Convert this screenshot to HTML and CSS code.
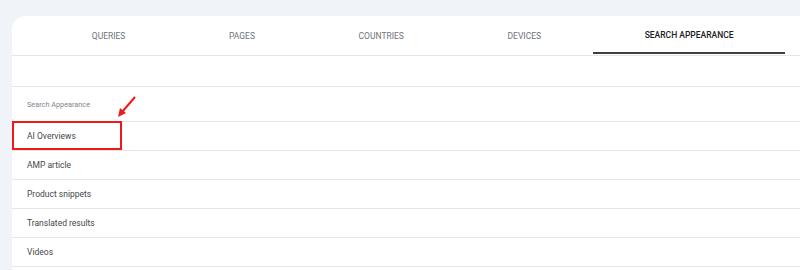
FILE: index.html
```html
<!DOCTYPE html>
<html lang="en">
<head>
    <meta charset="UTF-8">
    <meta name="viewport" content="width=device-width, initial-scale=1.0">
    <title>Search Appearance</title>
    <link rel="stylesheet" href="styles.css">
</head>
<body>
    <div class="report-card">
        <!-- Dimension tabs -->
        <nav class="tab-bar">
            <a class="tab">Queries</a>
            <a class="tab">Pages</a>
            <a class="tab">Countries</a>
            <a class="tab">Devices</a>
            <a class="tab tab-active">Search appearance</a>
        </nav>

        <div class="table-toolbar"></div>

        <div class="table">
            <div class="table-row table-head">Search Appearance</div>
            <div class="table-row row-highlighted">
                AI Overviews
                <span class="highlight-box"></span>
                <svg class="highlight-arrow" width="24" height="26" viewBox="0 0 24 26">
                    <line x1="19" y1="1" x2="6" y2="16" stroke="#f01818" stroke-width="2"></line>
                    <polygon points="2,21 4,12 10,17" fill="#f01818"></polygon>
                </svg>
            </div>
            <div class="table-row">AMP article</div>
            <div class="table-row">Product snippets</div>
            <div class="table-row">Translated results</div>
            <div class="table-row">Videos</div>
        </div>
    </div>
</body>
</html>
```

FILE: styles.css
```css
:root {
    --page-bg: #f0f3f8;
    --card-bg: #ffffff;
    --line: #e6e6e6;
    --text-main: #44474a;
    --text-muted: #80868b;
    --tab-text: #6f7377;
    --tab-active: #202124;
    --mark-red: #f01818;
}

* {
    box-sizing: border-box;
}

body {
    margin: 0;
    padding: 16px 0 0 12px;
    background: var(--page-bg);
    font-family: Roboto, "Liberation Sans", sans-serif;
    overflow: hidden;
}

.report-card {
    background: var(--card-bg);
    border-top-left-radius: 14px;
    width: 820px;
    min-height: 260px;
}

.tab-bar {
    display: flex;
    padding-left: 28px;
    height: 40px;
    border-bottom: 1px solid var(--line);
}

.tab {
    display: flex;
    align-items: center;
    padding: 1px 51.8px 0;
    font-size: 8.5px;
    font-weight: 400;
    text-transform: uppercase;
    color: var(--tab-text);
}

.tab-active {
    color: var(--tab-active);
    font-weight: 500;
    border-bottom: 2px solid #3c4043;
    height: 38px;
}

.table-toolbar {
    height: 31px;
    border-bottom: 1px solid var(--line);
}

.table-row {
    position: relative;
    display: flex;
    align-items: center;
    height: 29px;
    padding-left: 15px;
    border-bottom: 1px solid var(--line);
    font-size: 8.5px;
    color: var(--text-main);
}

.table-head {
    height: 35px;
    font-size: 7.3px;
    color: var(--text-muted);
}

/* annotation drawn over the first row */
.highlight-box {
    position: absolute;
    left: 0;
    top: -1px;
    width: 110px;
    height: 29px;
    border: 2px solid var(--mark-red);
}

.highlight-arrow {
    position: absolute;
    left: 104px;
    top: -26px;
}
```
